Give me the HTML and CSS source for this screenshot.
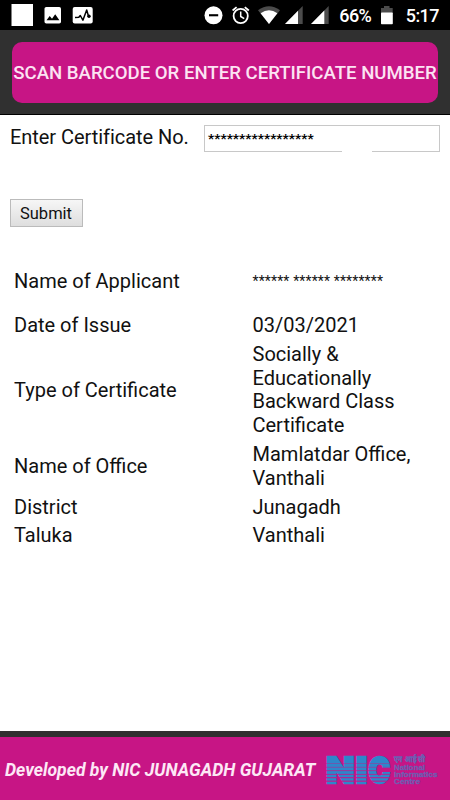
FILE: index.html
```
<!DOCTYPE html>
<html lang="en">

<head>
    <meta charset="UTF-8">
    <meta name="viewport" content="width=device-width, initial-scale=1.0">
    <title>Scan Barcode or Enter Certificate Number</title>
    <link rel="stylesheet" href="styles.css">
</head>

<body>
    <div class="statusbar">
        <svg class="status-icons" width="450" height="30" viewBox="0 0 450 30">
            <rect x="11.5" y="4" width="21.5" height="22" fill="#fff" />
            <!-- picture -->
            <rect x="44.5" y="7" width="16.5" height="16.5" rx="1.8" fill="#fff" />
            <path d="M46.5 20.3l3.2-4.2 2.3 2.7 3.2-4.5 4.2 6z" fill="#000" />
            <!-- activity -->
            <rect x="72.7" y="7" width="20" height="16.5" rx="2" fill="#fff" />
            <path d="M75 17.5l3.8-.2 1.5-1.8 2.6 4.7 3.8-10.2 2 7" fill="none" stroke="#000" stroke-width="1.5" stroke-linejoin="round" />
            <circle cx="89" cy="16.3" r="1.7" fill="#000" />
            <!-- do not disturb -->
            <circle cx="213.5" cy="15.3" r="9" fill="#fff" />
            <rect x="209" y="14.2" width="9.2" height="2.1" fill="#000" />
            <!-- alarm -->
            <g fill="none" stroke="#fff" stroke-width="1.8">
                <circle cx="240.7" cy="16" r="7.1" />
                <path d="M240.7 11.5v5l3.5 2.2" stroke-width="1.5" />
                <path d="M232.6 10.5l4-3.4M248.8 10.5l-4-3.4" />
            </g>
            <!-- wifi -->
            <path d="M258 10.3Q269 2.3 280 10.3L269 24z" fill="#4b4b4b" />
            <path d="M260.6 13.3Q269 7.3 277.4 13.3L269 24z" fill="#fff" />
            <!-- signal -->
            <path d="M285 24L302.7 6v18z" fill="#4b4b4b" />
            <path d="M285 24L298 10.8V24z" fill="#fff" />
            <path d="M311 24L328.7 6v18z" fill="#4b4b4b" />
            <path d="M311 24L324.3 10.5V24z" fill="#fff" />
            <!-- battery -->
            <path d="M381 8h3V6h5.5v2h3.2v5H381z" fill="#4b4b4b" />
            <rect x="381" y="12.5" width="11.8" height="11.8" rx=".7" fill="#fff" />
            <text x="339.3" y="21.6" textLength="32.5" class="status-text">66%</text>
            <text x="405.8" y="21.6" textLength="33.6" class="status-text">5:17</text>
        </svg>
    </div>

    <div class="header">
        <div class="scan-btn">SCAN BARCODE OR ENTER CERTIFICATE NUMBER</div>
    </div>

    <div class="content">
        <div class="field">
            <label class="field-label">Enter Certificate No.</label>
            <div class="field-input">*****************<span class="wipe"></span></div>
        </div>
        <button class="submit">Submit</button>

        <div class="details">
            <div class="row row-name"><span>Name of Applicant</span><span class="masked">****** ****** ********</span></div>
            <div class="row row-date"><span>Date of Issue</span><span>03/03/2021</span></div>
            <div class="row"><span>Type of Certificate</span><span>Socially &amp;<br>Educationally<br>Backward Class<br>Certificate</span></div>
            <div class="row"><span>Name of Office</span><span>Mamlatdar Office,<br>Vanthali</span></div>
            <div class="row"><span>District</span><span>Junagadh</span></div>
            <div class="row"><span>Taluka</span><span>Vanthali</span></div>
        </div>
    </div>

    <div class="footer">
        <span class="credit">Developed by NIC JUNAGADH GUJARAT</span>
        <svg class="logo" width="114" height="34" viewBox="0 0 114 34">
            <g class="logo-nic">
                <text x=".2" y="31" textLength="28" lengthAdjust="spacingAndGlyphs">N</text>
                <text x="30" y="31" textLength="11" lengthAdjust="spacingAndGlyphs">I</text>
                <text x="42.5" y="31" textLength="21.5" lengthAdjust="spacingAndGlyphs">C</text>
            </g>
            <g fill="#c71585">
                <rect x="-1" y="11.3" width="66" height=".4" />
                <rect x="-1" y="14.9" width="66" height=".5" />
                <rect x="-1" y="18.4" width="66" height=".7" />
                <rect x="-1" y="21.9" width="66" height=".8" />
                <rect x="-1" y="25.2" width="66" height="1" />
                <rect x="-1" y="28.6" width="66" height="1.1" />
            </g>
            <text x="68" y="10.2" textLength="31" lengthAdjust="spacingAndGlyphs" class="logo-hindi">एन आई सी</text>
            <text x="68" y="18" textLength="31" lengthAdjust="spacingAndGlyphs" class="logo-small">National</text>
            <text x="68" y="25" textLength="43.5" lengthAdjust="spacingAndGlyphs" class="logo-small">Informatics</text>
            <text x="68" y="32" textLength="26" lengthAdjust="spacingAndGlyphs" class="logo-small">Centre</text>
        </svg>
    </div>
</body>

</html>
```

FILE: styles.css
```
* {
    box-sizing: border-box;
}

body {
    margin: 0;
    height: 800px;
    display: flex;
    flex-direction: column;
    overflow: hidden;
    background-color: #fff;
    color: #111;
    font-family: Roboto, "Liberation Sans", sans-serif;
}

.statusbar {
    height: 30px;
    background-color: #000;
}

.status-icons {
    display: block;
}

.status-text {
    font-size: 18px;
    font-weight: 500;
    fill: #fff;
}

.header {
    height: 85px;
    padding: 12px 12px 0;
    background-color: #303030;
    border-bottom: 1px solid #000;
}

.scan-btn {
    height: 61px;
    width: 426px;
    line-height: 63px;
    border-radius: 10px;
    background-color: #c71585;
    color: #fce3f3;
    font-size: 18.6px;
    font-weight: 500;
    text-align: center;
    white-space: nowrap;
}

.content {
    flex: 1;
    padding: 10px 10px 0;
}

.field {
    display: flex;
    justify-content: space-between;
    height: 27px;
}

.field-label {
    font-size: 20px;
    line-height: 25px;
    letter-spacing: -0.05px;
    white-space: nowrap;
}

.field-input {
    position: relative;
    width: 236px;
    height: 27px;
    padding-left: 3px;
    border: 1px solid #c8c8c8;
    font-size: 13.7px;
    font-weight: 700;
    line-height: 25px;
    color: #000;
}

.wipe {
    position: absolute;
    left: 137px;
    bottom: -1px;
    width: 30px;
    height: 1px;
    background-color: #fff;
}

.submit {
    display: block;
    width: 73px;
    height: 28px;
    margin-top: 47px;
    padding: 0 1px 0 0;
    border: 1px solid #bbb;
    background: linear-gradient(#f6f6f6, #dedede);
    color: #111;
    font-family: inherit;
    font-size: 16.5px;
}

.details {
    display: flex;
    flex-direction: column;
    gap: 5px;
    padding: 34.4px 0 0 4px;
    font-size: 20px;
    line-height: 23.8px;
}

.row {
    display: grid;
    grid-template-columns: 238.5px 1fr;
    align-items: center;
}

.row-name {
    height: 41px;
}

.row-date {
    height: 30.5px;
    padding-top: 6.6px;
}

.masked {
    font-size: 14px;
    letter-spacing: 0.14px;
}

.footer {
    display: flex;
    align-items: center;
    height: 69px;
    padding: 0 10px 0 5px;
    background-color: #c71585;
    border-top: 6px solid #303030;
}

.credit {
    width: 321px;
    padding-top: 2px;
    color: #fde8f6;
    font-size: 17.6px;
    font-weight: 700;
    font-style: italic;
    white-space: nowrap;
}

.logo {
    flex-shrink: 0;
    overflow: visible;
}

.logo-nic {
    font-family: Inter, sans-serif;
    font-size: 35.5px;
    font-weight: 900;
    fill: #2e86cb;
    stroke: #2e86cb;
    stroke-width: 2.6;
}

.logo-hindi,
.logo-small {
    font-size: 7px;
    font-weight: 700;
    font-family: "Liberation Sans", sans-serif;
    fill: #6f5db2;
    stroke: #6f5db2;
    stroke-width: 0.3;
}

.logo-hindi {
    font-size: 8.5px;
}
```
